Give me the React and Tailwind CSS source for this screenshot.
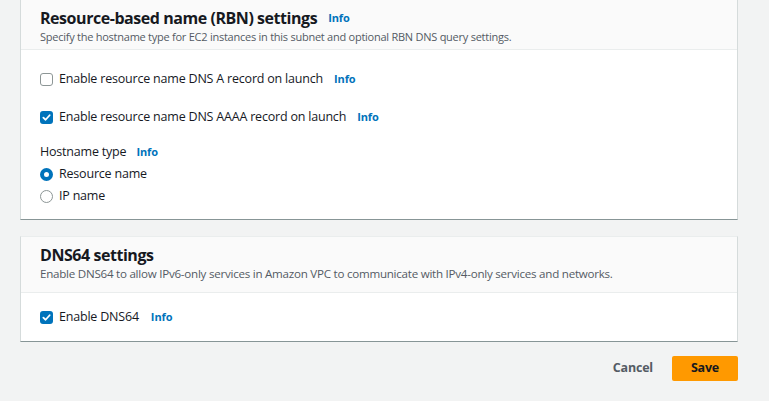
import React from "react";

const font = { fontFamily: '"Open Sans", "Noto Sans", sans-serif' };

function Info({ ml = "ml-[11px]" }) {
  return <span className={"text-[11px] font-bold text-[#0073bb] tracking-[-0.1px] " + ml}>Info</span>;
}

function Checkbox({ checked }) {
  return checked ? (
    <span className="w-[13px] h-[13px] rounded-[3px] bg-[#0073bb] flex items-center justify-center shrink-0">
      <svg width="9" height="9" viewBox="0 0 10 10">
        <path d="M1.5 5.2 L4 7.5 L8.5 2.5" fill="none" stroke="white" strokeWidth="2" strokeLinecap="round" strokeLinejoin="round" />
      </svg>
    </span>
  ) : (
    <span className="w-[13px] h-[13px] rounded-[3px] border-[1.5px] border-[#8d9696] bg-white shrink-0" />
  );
}

function Radio({ checked }) {
  return checked ? (
    <span className="w-[13px] h-[13px] rounded-full border-[4px] border-[#0073bb] bg-white shrink-0" />
  ) : (
    <span className="w-[13px] h-[13px] rounded-full border-[1.5px] border-[#8d9696] bg-white shrink-0" />
  );
}

const body = "text-[12.5px] tracking-[-0.2px]";

export default function App() {
  return (
    <div className="w-[769px] h-[401px] overflow-hidden bg-[#f2f3f3] text-[#16191f]" style={font}>
      <div className="ml-[20px] w-[718px]">
        <div className="mt-[-10px] bg-white border-x border-[#d5dbdb] border-b border-b-[#879596]">
          <div className="bg-[#fafafa] border-b border-[#eaeded] px-[19px] pt-[17px] pb-[4px]">
            <div className="flex items-center">
              <span className="text-[16px] font-bold leading-[22px] tracking-[-0.45px]">Resource-based name (RBN) settings</span>
              <Info />
            </div>
            <div className="text-[11px] text-[#545b64] leading-[16px] tracking-[-0.25px]">
              Specify the hostname type for EC2 instances in this subnet and optional RBN DNS query settings.
            </div>
          </div>
          <div className="px-[19px] pt-[20px] pb-[14px]">
            <div className="flex items-center gap-[6px] h-[18px]">
              <Checkbox />
              <span className={body}>Enable resource name DNS A record on launch</span>
              <Info ml="ml-[5px]" />
            </div>
            <div className="flex items-center gap-[6px] h-[18px] mt-[20px]">
              <Checkbox checked />
              <span className={body}>Enable resource name DNS AAAA record on launch</span>
              <Info ml="ml-[5px]" />
            </div>
            <div className="flex items-center h-[18px] mt-[17px]">
              <span className={body}>Hostname type</span>
              <Info ml="ml-[10px]" />
            </div>
            <div className="flex items-center gap-[6px] h-[18px] mt-[4px]">
              <Radio checked />
              <span className={body}>Resource name</span>
            </div>
            <div className="flex items-center gap-[6px] h-[18px] mt-[4px]">
              <Radio />
              <span className={body}>IP name</span>
            </div>
          </div>
        </div>

        <div className="mt-[16px] bg-white border-x border-[#d5dbdb] border-t border-t-[#eaeded] border-b border-b-[#879596]">
          <div className="bg-[#fafafa] border-b border-[#eaeded] px-[19px] pt-[7px] pb-[10px]">
            <div className="text-[16px] font-bold leading-[22px] tracking-[-0.45px]">DNS64 settings</div>
            <div className="text-[11.6px] text-[#545b64] leading-[16px] tracking-[-0.25px]">
              Enable DNS64 to allow IPv6-only services in Amazon VPC to communicate with IPv4-only services and networks.
            </div>
          </div>
          <div className="px-[19px] pt-[15px] pb-[15px]">
            <div className="flex items-center gap-[6px] h-[18px]">
              <Checkbox checked />
              <span className={body}>Enable DNS64</span>
              <Info ml="ml-[6px]" />
            </div>
          </div>
        </div>

        <div className="flex justify-end items-center mt-[14px] gap-[19px]">
          <span className="text-[12.5px] font-bold text-[#545b64] tracking-[-0.2px]">Cancel</span>
          <span className="w-[66px] h-[25px] bg-[#ff9900] flex items-center justify-center text-[12.5px] font-bold rounded-[2px] tracking-[-0.2px]">Save</span>
        </div>
      </div>
    </div>
  );
}
